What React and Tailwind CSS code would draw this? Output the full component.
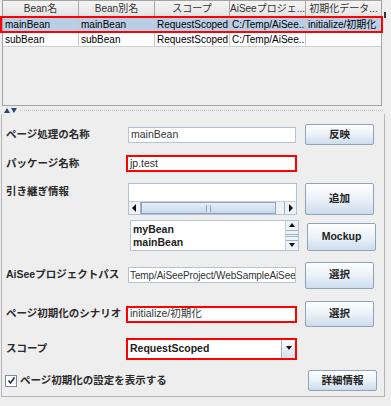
const cols = [
  { title: "Bean名", w: "w-[76px]" },
  { title: "Bean別名", w: "w-[76px]" },
  { title: "スコープ", w: "w-[75px]" },
  { title: "AiSeeプロジェ...", w: "w-[76px]" },
  { title: "初期化データ...", w: "w-[75px]" },
];

const rows = [
  ["mainBean", "mainBean", "RequestScoped", "C:/Temp/AiSee...", "initialize/初期化"],
  ["subBean", "subBean", "RequestScoped", "C:/Temp/AiSee...", ""],
];

const Btn = ({ children, className = "" }) => (
  <button
    className={`w-[69px] rounded-[2px] border border-[#8fa4bc] bg-linear-to-b from-[#ffffff] via-[#eaf1f8] to-[#cddcec] text-[10.5px] font-bold text-[#222] flex items-center justify-center ${className}`}
  >
    {children}
  </button>
);

const Label = ({ children, className = "" }) => (
  <div className={`w-[124px] pl-[4px] text-[10.5px] font-bold text-[#2a2a2a] whitespace-nowrap ${className}`}>
    {children}
  </div>
);

const Field = ({ value, red }) =>
  red ? (
    <div className="w-[171px] h-[17px] border-2 border-[#ff0000] bg-white flex items-center pl-[2px] text-[10.5px] text-[#333] overflow-hidden whitespace-nowrap">
      {value}
    </div>
  ) : (
    <div className="ml-[2px] w-[168px] h-[16px] border border-[#b3c3d5] bg-white flex items-center pl-[2px] text-[10.5px] text-[#333] overflow-hidden whitespace-nowrap">
      {value}
    </div>
  );

const Tri = ({ dir }) => {
  const p = {
    up: "M1 5 L4 1 L7 5 Z",
    down: "M1 1 L4 5 L7 1 Z",
    left: "M5 0 L1 4 L5 8 Z",
    right: "M2 0 L6 4 L2 8 Z",
  }[dir];
  return (
    <svg width="8" height="8" viewBox="0 0 8 8">
      <path d={p} fill="#111" />
    </svg>
  );
};

export default function App() {
  return (
    <div className="relative w-[391px] h-[406px] overflow-hidden bg-[#eeeeee] font-['Liberation_Sans','Noto_Sans_CJK_JP',sans-serif] text-black">
      {/* table */}
      <div className="flex">
        <div className="ml-[2px] w-[380px] h-[106px] border border-[#a3a3a3] bg-[#efefef]">
          <div className="flex h-[16px] bg-linear-to-b from-[#f4f4f4] to-[#e4e4e4] border-b border-[#a8a8a8]">
            {cols.map((c, i) => (
              <div
                key={i}
                className={`${c.w} flex items-center justify-center text-[10px] text-[#333] whitespace-nowrap overflow-hidden ${i < 4 ? "border-r border-[#a8a8a8]" : ""}`}
              >
                {c.title}
              </div>
            ))}
          </div>
          {rows.map((r, ri) => (
            <div
              key={ri}
              className={`flex h-[15px] border-b border-[#cfcfcf] ${ri === 0 ? "bg-[#b8cfe5]" : "bg-white"}`}
            >
              {r.map((cell, ci) => (
                <div
                  key={ci}
                  className={`${cols[ci].w} flex items-center pl-[2px] text-[10px] whitespace-nowrap overflow-hidden ${ci < 4 ? "border-r border-[#c8c8c8]" : ""}`}
                >
                  {cell}
                </div>
              ))}
            </div>
          ))}
        </div>
        <div className="ml-[2px] mt-[12px] w-[2px] h-[6px] bg-[#333]" />
      </div>

      {/* selected row outline */}
      <div className="absolute left-0 top-[16px] w-[383px] h-[17px] border-2 border-[#ff0000]" />

      {/* split divider */}
      <div className="h-[8px] flex items-center pl-[4px] gap-[1px]">
        <svg width="6" height="5" viewBox="0 0 6 5">
          <path d="M0 5 L3 0 L6 5 Z" fill="#27467a" />
        </svg>
        <svg width="6" height="5" viewBox="0 0 6 5">
          <path d="M0 0 L3 5 L6 0 Z" fill="#27467a" />
        </svg>
        <div className="ml-[2px] flex-1 border-t border-dotted border-[#c4c4c4] mr-[8px]" />
      </div>

      {/* form panel */}
      <div className="ml-[1px] w-[384px] h-[283px] border-l border-r border-b border-[#b4b4b4] pt-[9px]">
        {/* row 1 */}
        <div className="flex items-center h-[23px]">
          <Label>ページ処理の名称</Label>
          <div className="w-[171px]">
            <Field value="mainBean" />
          </div>
          <Btn className="ml-[8px] h-[21px]">反映</Btn>
        </div>

        {/* row 2 */}
        <div className="flex items-center h-[17px] mt-[9px]">
          <Label>パッケージ名称</Label>
          <Field value="jp.test" red />
        </div>

        {/* row 3 */}
        <div className="flex h-[32px] mt-[11px]">
          <Label className="pt-[1px]">引き継ぎ情報</Label>
          <div className="ml-[2px] w-[169px] h-[32px] border border-[#b3c3d5] bg-white flex flex-col">
            <div className="flex-1" />
            <div className="h-[13px] flex border-t border-[#c5d2e0] bg-[#eef2f7]">
              <div className="w-[12px] flex items-center justify-center border-r border-[#9fb2c8]">
                <Tri dir="left" />
              </div>
              <div className="flex-1 flex pr-[8px]">
                <div className="flex-1 border border-[#8fa4bc] bg-linear-to-b from-[#e6eef7] to-[#c9d9eb] flex items-center justify-center">
                  <div className="w-[5px] h-[7px] border-x border-[#8fa4bc] bg-[#dbe6f2]" />
                </div>
              </div>
              <div className="w-[12px] flex items-center justify-center border-l border-[#9fb2c8]">
                <Tri dir="right" />
              </div>
            </div>
          </div>
          <Btn className="ml-[8px] h-[32px]">追加</Btn>
        </div>

        {/* row 4 */}
        <div className="flex items-end h-[32px] mt-[4px]">
          <div className="w-[124px]" />
          <div className="ml-[4px] w-[169px] h-[31px] border border-[#b3c3d5] bg-white flex">
            <div className="flex-1 pl-[2px] flex flex-col justify-center text-[10.5px] font-bold leading-[12.5px] text-[#222]">
              <div>myBean</div>
              <div>mainBean</div>
            </div>
            <div className="w-[13px] flex flex-col border-l border-[#c5d2e0] bg-[#eef2f7]">
              <div className="h-[10px] flex items-center justify-center border-b border-[#9fb2c8]">
                <Tri dir="up" />
              </div>
              <div className="flex-1 flex items-center">
                <div className="w-full h-[3px] border-y border-[#9fb2c8]" />
              </div>
              <div className="h-[10px] flex items-center justify-center border-t border-[#9fb2c8]">
                <Tri dir="down" />
              </div>
            </div>
          </div>
          <Btn className="ml-[8px] h-[28px] font-['Liberation_Sans',sans-serif]">Mockup</Btn>
        </div>

        {/* row 5 */}
        <div className="flex items-center h-[28px] mt-[10px]">
          <Label>AiSeeプロジェクトパス</Label>
          <div className="w-[171px]">
            <div className="ml-[2px] w-[168px] h-[16px] border border-[#b3c3d5] bg-white flex items-center pl-[1px] text-[10px] tracking-[-0.1px] text-[#333] overflow-hidden whitespace-nowrap">
              Temp/AiSeeProject/WebSampleAiSee
            </div>
          </div>
          <Btn className="ml-[8px] h-[27px]">選択</Btn>
        </div>

        {/* row 6 */}
        <div className="flex items-center h-[26px] mt-[12px]">
          <Label>ページ初期化のシナリオ</Label>
          <Field value="initialize/初期化" red />
          <Btn className="ml-[8px] h-[26px]">選択</Btn>
        </div>

        {/* row 7 */}
        <div className="flex items-center h-[22px] mt-[11px]">
          <Label>スコープ</Label>
          <div className="w-[171px] h-[22px] border-2 border-[#ff0000] bg-white flex">
            <div className="flex-1 flex items-center pl-[2px] text-[10.5px] font-bold text-[#222]">
              RequestScoped
            </div>
            <div className="w-[14px] flex items-center justify-center border-l border-[#9fb2c8] bg-linear-to-b from-[#ffffff] to-[#d4e1ee]">
              <Tri dir="down" />
            </div>
          </div>
        </div>

        {/* row 8 */}
        <div className="flex items-center h-[21px] mt-[10px]">
          <div className="w-[297px] pl-[3px] flex items-center gap-[3px]">
            <div className="w-[12px] h-[12px] border border-[#7a8a99] bg-white flex items-center justify-center">
              <svg width="9" height="9" viewBox="0 0 9 9">
                <path d="M1.5 4.5 L3.5 7 L7.5 1.5" stroke="#1c2f55" strokeWidth="1.6" fill="none" />
              </svg>
            </div>
            <span className="text-[10.5px] font-bold text-[#2a2a2a] whitespace-nowrap">
              ページ初期化の設定を表示する
            </span>
          </div>
          <Btn className="ml-[9px] w-[67px] h-[21px]">詳細情報</Btn>
        </div>
      </div>
    </div>
  );
}
